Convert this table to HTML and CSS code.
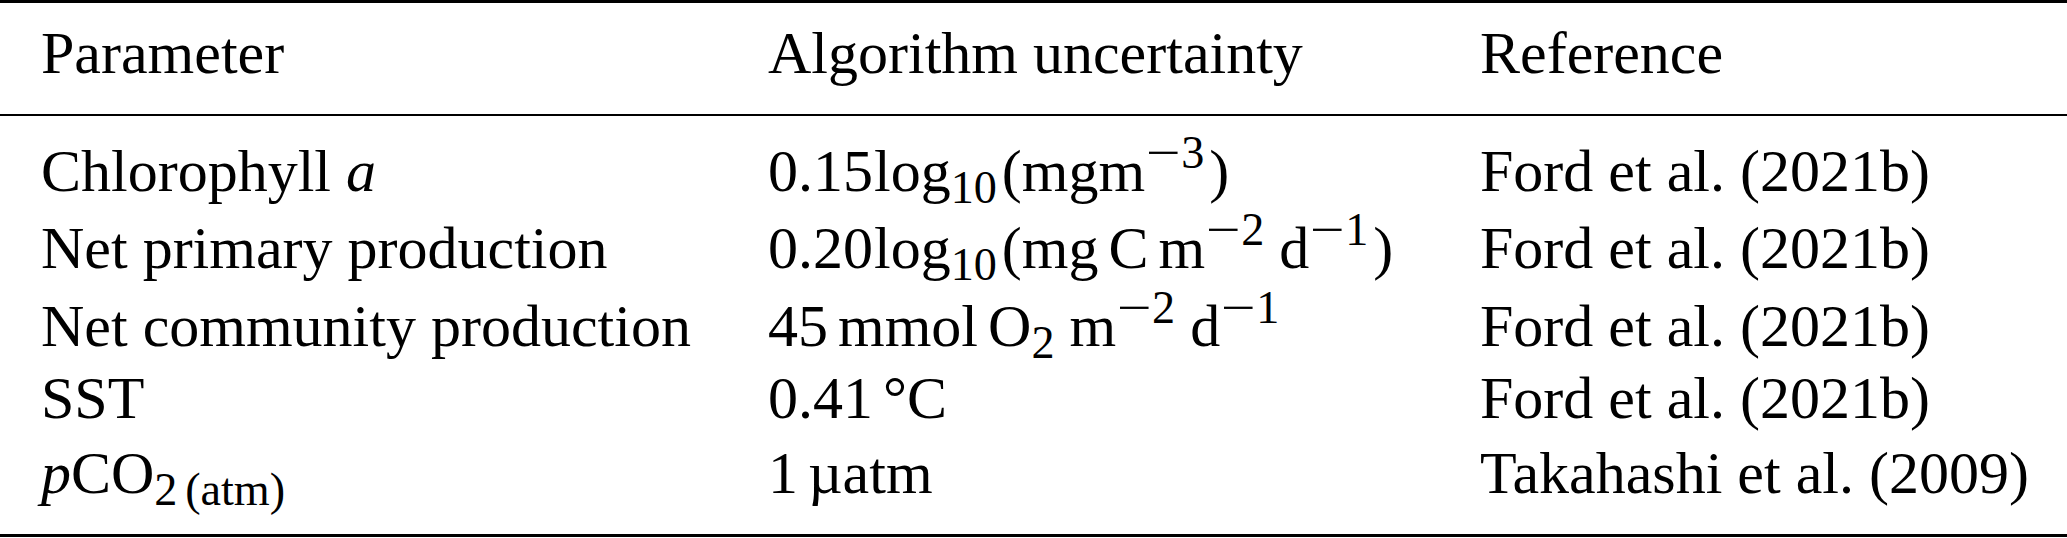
FILE: index.html
```html
<!DOCTYPE html>
<html lang="en">
<head>
<meta charset="utf-8">
<title>Algorithm uncertainty table</title>
<link rel="stylesheet" href="styles.css">
</head>
<body>
<div class="tbl">
  <div class="row head">
    <div class="cell">Parameter</div>
    <div class="cell">Algorithm uncertainty</div>
    <div class="cell">Reference</div>
  </div>
  <div class="body">
    <div class="row r1">
      <div class="cell">Chlorophyll <i>a</i></div>
      <div class="cell">0.15<span class="op">log</span><sub class="sb">10</sub>(mgm<sup class="sp"><span class="mn">−</span>3</sup>)</div>
      <div class="cell">Ford et al. (2021b)</div>
    </div>
    <div class="row r2">
      <div class="cell">Net primary production</div>
      <div class="cell">0.20<span class="op">log</span><sub class="sb">10</sub>(mg<span class="ts"></span>C<span class="ts"></span>m<sup class="sp"><span class="mn">−</span>2</sup><span class="ts"></span>d<sup class="sp"><span class="mn">−</span>1</sup>)</div>
      <div class="cell">Ford et al. (2021b)</div>
    </div>
    <div class="row r3">
      <div class="cell">Net community production</div>
      <div class="cell">45<span class="ts"></span>mmol<span class="ts"></span>O<sub class="sb">2</sub><span class="ts"></span>m<sup class="sp"><span class="mn">−</span>2</sup><span class="ts"></span>d<sup class="sp"><span class="mn">−</span>1</sup></div>
      <div class="cell">Ford et al. (2021b)</div>
    </div>
    <div class="row r4">
      <div class="cell">SST</div>
      <div class="cell">0.41<span class="ts"></span>°C</div>
      <div class="cell">Ford et al. (2021b)</div>
    </div>
    <div class="row r5">
      <div class="cell"><i>p</i>CO<sub class="sb">2<span class="ts"></span>(atm)</sub></div>
      <div class="cell">1<span class="ts"></span>µatm</div>
      <div class="cell">Takahashi et al. (2009)</div>
    </div>
  </div>
</div>
</body>
</html>
```
FILE: styles.css
```css
html, body {
  margin: 0;
  padding: 0;
  background: #ffffff;
}

body {
  color: #000000;
  font-family: "Liberation Serif", "Times New Roman", serif;
  font-size: 60px;
}

.tbl {
  width: 2067px;
  border-top: 3px solid #000000;
  border-bottom: 3px solid #000000;
}

.row {
  display: grid;
  grid-template-columns: 727px 712px 1fr;
  line-height: 70px;
  white-space: nowrap;
}

.cell {
  padding-left: 41px;
}

.head {
  padding: 15px 0 26px;
  border-bottom: 2px solid #000000;
}

.body {
  padding: 20px 0 26px;
}

.r2 { margin-top: 7px; }
.r3 { margin-top: 8px; }
.r4 { margin-top: 2px; }
.r5 { margin-top: 5px; }

.op {
  margin-left: 1px;
}

.sb,
.sp {
  font-size: 0.77em;
  line-height: 0;
  margin-right: 5px;
}

.sb {
  vertical-align: -0.27em;
}

.sp {
  vertical-align: 0.49em;
}

.mn {
  display: inline-block;
  width: 0.778em;
  text-align: center;
  transform: scaleX(1.33);
}

.ts {
  display: inline-block;
  width: 0.167em;
}

i {
  font-style: italic;
}
```
